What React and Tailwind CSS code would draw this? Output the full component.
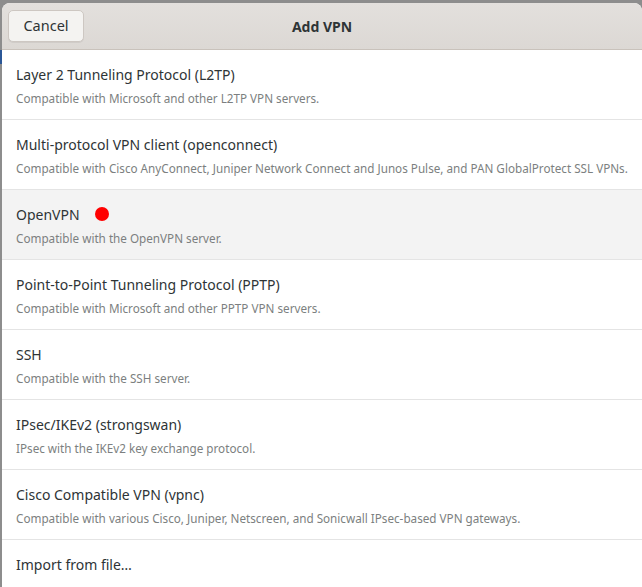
import React from 'react'

const vpns = [
  { title: 'Layer 2 Tunneling Protocol (L2TP)', desc: 'Compatible with Microsoft and other L2TP VPN servers.' },
  { title: 'Multi-protocol VPN client (openconnect)', desc: 'Compatible with Cisco AnyConnect, Juniper Network Connect and Junos Pulse, and PAN GlobalProtect SSL VPNs.' },
  { title: 'OpenVPN', desc: 'Compatible with the OpenVPN server.', hover: true, dot: true },
  { title: 'Point-to-Point Tunneling Protocol (PPTP)', desc: 'Compatible with Microsoft and other PPTP VPN servers.' },
  { title: 'SSH', desc: 'Compatible with the SSH server.' },
  { title: 'IPsec/IKEv2 (strongswan)', desc: 'IPsec with the IKEv2 key exchange protocol.' },
  { title: 'Cisco Compatible VPN (vpnc)', desc: 'Compatible with various Cisco, Juniper, Netscreen, and Sonicwall IPsec-based VPN gateways.' },
]

function Row({ item }) {
  return (
    <div className={`h-[70px] shrink-0 border-b border-[#e4e4e4] px-[14px] pt-[14px] ${item.hover ? 'bg-[#f3f3f3]' : 'bg-white'}`}>
      <div className="flex items-center h-[20px] text-[14px] text-[#2e3436]">
        {item.title}
        {item.dot && <span className="ml-[15px] w-[14px] h-[14px] rounded-full bg-[#ff0000]"></span>}
      </div>
      <div className="mt-[6px] h-[16px] leading-[16px] text-[11.7px] text-[#7c7f80] whitespace-nowrap">{item.desc}</div>
    </div>
  )
}

export default function App() {
  return (
    <div className="w-[642px] h-[587px] overflow-hidden flex bg-[#8d8d8d]" style={{ fontFamily: '"Noto Sans", sans-serif' }}>
      <div className="w-[2px] shrink-0 flex flex-col pt-[50px]">
        <div className="h-[14px] bg-[#2b5797]"></div>
      </div>
      <div className="flex-1 mt-[3px] flex flex-col rounded-t-[8px] overflow-hidden bg-white">
        <header className="h-[47px] shrink-0 relative flex items-center justify-center bg-gradient-to-b from-[#e3e0dd] to-[#dcd8d4] border-b border-[#c9c2bb]">
          <button className="absolute left-[6px] top-[7px] w-[76px] h-[32px] rounded-[5px] border border-[#cdc7c2] bg-[#f4f3f1] text-[14.5px] text-[#2e3436] shadow-[0_1px_0_rgba(0,0,0,0.06)]">
            Cancel
          </button>
          <h1 className="text-[14px] font-bold text-[#2e3436]">Add VPN</h1>
        </header>
        <div className="flex flex-col">
          {vpns.map((v) => <Row key={v.title} item={v} />)}
          <div className="h-[70px] px-[14px] pt-[14px] bg-white">
            <div className="h-[20px] text-[14px] text-[#2e3436]">Import from file…</div>
          </div>
        </div>
      </div>
    </div>
  )
}
